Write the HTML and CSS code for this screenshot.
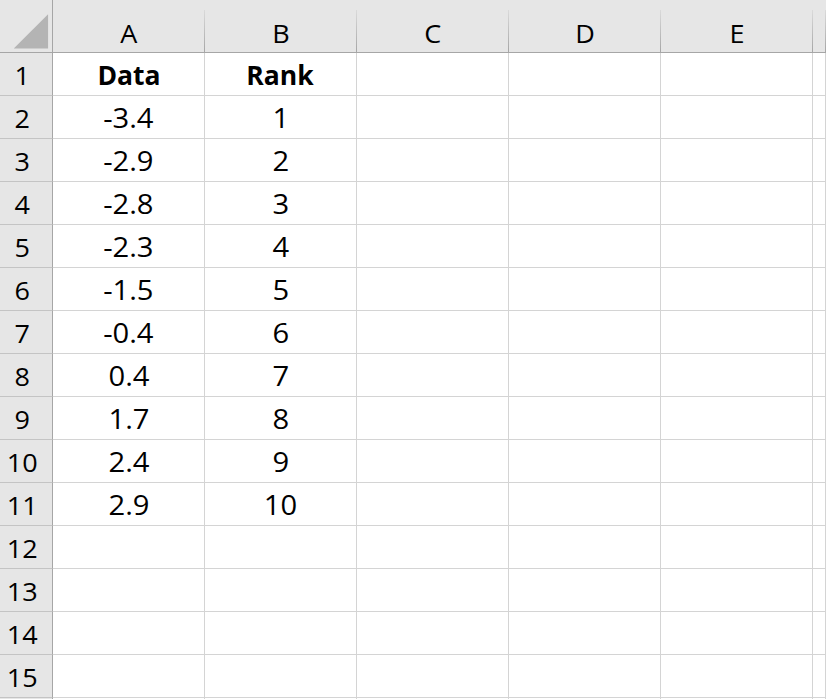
FILE: index.html
```html
<!DOCTYPE html>
<html lang="en">
<head>
  <meta charset="UTF-8" />
  <title>Rank</title>
  <link rel="stylesheet" href="styles.css">
</head>
<body>
  <div class="sheet">
    <!-- kolomkoppen -->
    <div class="corner">
      <svg width="53" height="53" viewBox="0 0 53 53"><polygon points="49,14 49,49 14,49" fill="#b4b4b4"/></svg>
    </div>
    <div class="col-head"><span>A</span></div>
    <div class="col-head"><span>B</span></div>
    <div class="col-head"><span>C</span></div>
    <div class="col-head"><span>D</span></div>
    <div class="col-head"><span>E</span></div>
    <div class="col-head"></div>

    <div class="row-head"><span>1</span></div>
    <div class="cell bold"><span>Data</span></div>
    <div class="cell bold"><span>Rank</span></div>
    <div class="cell"></div><div class="cell"></div><div class="cell"></div><div class="cell"></div>

    <div class="row-head"><span>2</span></div>
    <div class="cell"><span>-3.4</span></div>
    <div class="cell"><span>1</span></div>
    <div class="cell"></div><div class="cell"></div><div class="cell"></div><div class="cell"></div>

    <div class="row-head"><span>3</span></div>
    <div class="cell"><span>-2.9</span></div>
    <div class="cell"><span>2</span></div>
    <div class="cell"></div><div class="cell"></div><div class="cell"></div><div class="cell"></div>

    <div class="row-head"><span>4</span></div>
    <div class="cell"><span>-2.8</span></div>
    <div class="cell"><span>3</span></div>
    <div class="cell"></div><div class="cell"></div><div class="cell"></div><div class="cell"></div>

    <div class="row-head"><span>5</span></div>
    <div class="cell"><span>-2.3</span></div>
    <div class="cell"><span>4</span></div>
    <div class="cell"></div><div class="cell"></div><div class="cell"></div><div class="cell"></div>

    <div class="row-head"><span>6</span></div>
    <div class="cell"><span>-1.5</span></div>
    <div class="cell"><span>5</span></div>
    <div class="cell"></div><div class="cell"></div><div class="cell"></div><div class="cell"></div>

    <div class="row-head"><span>7</span></div>
    <div class="cell"><span>-0.4</span></div>
    <div class="cell"><span>6</span></div>
    <div class="cell"></div><div class="cell"></div><div class="cell"></div><div class="cell"></div>

    <div class="row-head"><span>8</span></div>
    <div class="cell"><span>0.4</span></div>
    <div class="cell"><span>7</span></div>
    <div class="cell"></div><div class="cell"></div><div class="cell"></div><div class="cell"></div>

    <div class="row-head"><span>9</span></div>
    <div class="cell"><span>1.7</span></div>
    <div class="cell"><span>8</span></div>
    <div class="cell"></div><div class="cell"></div><div class="cell"></div><div class="cell"></div>

    <div class="row-head"><span>10</span></div>
    <div class="cell"><span>2.4</span></div>
    <div class="cell"><span>9</span></div>
    <div class="cell"></div><div class="cell"></div><div class="cell"></div><div class="cell"></div>

    <div class="row-head"><span>11</span></div>
    <div class="cell"><span>2.9</span></div>
    <div class="cell"><span>10</span></div>
    <div class="cell"></div><div class="cell"></div><div class="cell"></div><div class="cell"></div>

    <div class="row-head"><span>12</span></div>
    <div class="cell"></div><div class="cell"></div><div class="cell"></div><div class="cell"></div><div class="cell"></div><div class="cell"></div>

    <div class="row-head"><span>13</span></div>
    <div class="cell"></div><div class="cell"></div><div class="cell"></div><div class="cell"></div><div class="cell"></div><div class="cell"></div>

    <div class="row-head"><span>14</span></div>
    <div class="cell"></div><div class="cell"></div><div class="cell"></div><div class="cell"></div><div class="cell"></div><div class="cell"></div>

    <div class="row-head"><span>15</span></div>
    <div class="cell"></div><div class="cell"></div><div class="cell"></div><div class="cell"></div><div class="cell"></div><div class="cell"></div>

    <!-- onderrand van het venster -->
    <div class="row-head"></div>
    <div class="cell"></div><div class="cell"></div><div class="cell"></div><div class="cell"></div><div class="cell"></div><div class="cell"></div>
  </div>
</body>
</html>
```

FILE: styles.css
```css
body {
  margin: 0;
  background: #fff;
  color: #000;
  font-family: 'Open Sans', 'Liberation Sans', sans-serif;
  overflow: hidden;
}
.sheet {
  display: grid;
  grid-template-columns: 53px repeat(5, 152px) 1fr;
  grid-template-rows: 53px repeat(16, 43px);
  width: 826px;
  height: 699px;
  overflow: hidden;
}
.sheet > div {
  box-sizing: border-box;
  display: flex;
  align-items: flex-end;
  justify-content: center;
  overflow: hidden;
}
.sheet span {
  display: inline-block;
  line-height: 1;
  transform: scaleX(1.08);
}

/* hoek linksboven */
.corner {
  background: #e6e6e6;
  border-right: 1px solid #a6a6a6;
  border-bottom: 1px solid #a6a6a6;
}
.corner svg {
  display: block;
  align-self: flex-start;
}

/* kolomkoppen A..E met korte scheidingslijn */
.col-head {
  background: linear-gradient(#dadada, #a6a6a6) right bottom / 1px 42px no-repeat, #e6e6e6;
  border-bottom: 1px solid #a6a6a6;
  font-size: 25px;
  padding-bottom: 6px;
}

/* rijnummers */
.row-head {
  background: #e6e6e6;
  border-right: 1px solid #a6a6a6;
  border-bottom: 1px solid #c4c4c4;
  font-size: 25px;
  padding-right: 8px;
  padding-bottom: 7px;
}

.cell {
  border-right: 1px solid #d4d4d4;
  border-bottom: 1px solid #d4d4d4;
  font-size: 27px;
  padding-bottom: 7px;
}
.cell.bold {
  font-weight: 700;
  font-size: 26px;
}
.cell.bold span {
  transform: scaleX(1.02);
}
```
